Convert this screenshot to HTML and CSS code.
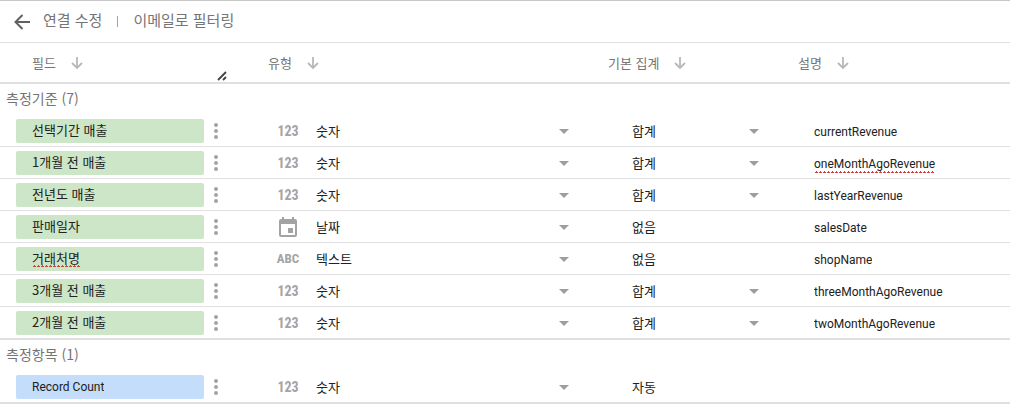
FILE: index.html
```html
<!DOCTYPE html>
<html lang="ko">
<head>
<meta charset="utf-8">
<title>연결 수정</title>
<link rel="stylesheet" href="styles.css">
</head>
<body>
<svg class="defs" aria-hidden="true">
  <symbol id="down" viewBox="0 0 12 12"><path d="M6 0v11M1 6l5 5 5-5" fill="none" stroke="currentColor" stroke-width="1.8"/></symbol>
  <symbol id="more" viewBox="0 0 4 16"><circle cx="2" cy="2" r="2"/><circle cx="2" cy="8" r="2"/><circle cx="2" cy="14" r="2"/></symbol>
  <symbol id="date" viewBox="0 0 18 20"><path fill-rule="evenodd" d="M3 0h2v2h8V0h2v2h1a2 2 0 0 1 2 2v14a2 2 0 0 1-2 2H2a2 2 0 0 1-2-2V4a2 2 0 0 1 2-2h1zM2 7v11h14V7zM9 11h5v5H9z"/></symbol>
</svg>
<header class="topbar">
  <button class="icon-button back" aria-label="뒤로"><svg width="16" height="16" viewBox="0 0 16 16"><path d="M16 8H2M8.500 1L1.500 8l7 7" fill="none" stroke="currentColor" stroke-width="2"/></svg></button>
  <a class="crumb" href="#">연결 수정</a>
  <span class="divider"></span>
  <a class="crumb" href="#">이메일로 필터링</a>
</header>
<table class="fields">
  <colgroup><col class="col-field"><col class="col-type"><col class="col-aggregation"><col></colgroup>
  <thead>
    <tr>
      <th><div class="heading">필드 <button class="icon-button" aria-label="필드 정렬"><svg width="12" height="12"><use href="#down"/></svg></button><svg class="resize" width="10" height="10" viewBox="0 0 10 10"><path d="M1 9l8-8M6 9l3-3" fill="none" stroke="#424242" stroke-width="1.8"/></svg></div></th>
      <th><div class="heading">유형 <button class="icon-button" aria-label="유형 정렬"><svg width="12" height="12"><use href="#down"/></svg></button></div></th>
      <th><div class="heading">기본 집계 <button class="icon-button" aria-label="집계 정렬"><svg width="12" height="12"><use href="#down"/></svg></button></div></th>
      <th><div class="heading">설명 <button class="icon-button" aria-label="설명 정렬"><svg width="12" height="12"><use href="#down"/></svg></button></div></th>
    </tr>
  </thead>
  <tbody>
    <tr class="group"><th colspan="4">측정기준 (7)</th></tr>
    <tr>
      <td><div class="name"><label class="chip"><input aria-label="필드 이름" value="선택기간 매출"></label><button class="icon-button" aria-label="더보기"><svg width="4" height="16"><use href="#more"/></svg></button></div></td>
      <td><div class="type"><span class="kind">123</span><label class="picker"><select aria-label="유형"><option>숫자</option></select></label></div></td>
      <td><div class="aggregation"><label class="picker"><select aria-label="기본 집계"><option>합계</option></select></label></div></td>
      <td><label class="description"><input aria-label="설명" value="currentRevenue"></label></td>
    </tr>
    <tr>
      <td><div class="name"><label class="chip"><input aria-label="필드 이름" value="1개월 전 매출"></label><button class="icon-button" aria-label="더보기"><svg width="4" height="16"><use href="#more"/></svg></button></div></td>
      <td><div class="type"><span class="kind">123</span><label class="picker"><select aria-label="유형"><option>숫자</option></select></label></div></td>
      <td><div class="aggregation"><label class="picker"><select aria-label="기본 집계"><option>합계</option></select></label></div></td>
      <td><label class="description"><input class="misspelled" aria-label="설명" value="oneMonthAgoRevenue"></label></td>
    </tr>
    <tr>
      <td><div class="name"><label class="chip"><input aria-label="필드 이름" value="전년도 매출"></label><button class="icon-button" aria-label="더보기"><svg width="4" height="16"><use href="#more"/></svg></button></div></td>
      <td><div class="type"><span class="kind">123</span><label class="picker"><select aria-label="유형"><option>숫자</option></select></label></div></td>
      <td><div class="aggregation"><label class="picker"><select aria-label="기본 집계"><option>합계</option></select></label></div></td>
      <td><label class="description"><input aria-label="설명" value="lastYearRevenue"></label></td>
    </tr>
    <tr>
      <td><div class="name"><label class="chip"><input aria-label="필드 이름" value="판매일자"></label><button class="icon-button" aria-label="더보기"><svg width="4" height="16"><use href="#more"/></svg></button></div></td>
      <td><div class="type"><span class="kind"><svg width="18" height="20"><use href="#date"/></svg></span><label class="picker"><select aria-label="유형"><option>날짜</option></select></label></div></td>
      <td><div class="aggregation">없음</div></td>
      <td><label class="description"><input aria-label="설명" value="salesDate"></label></td>
    </tr>
    <tr>
      <td><div class="name"><label class="chip"><input class="misspelled" aria-label="필드 이름" value="거래처명"></label><button class="icon-button" aria-label="더보기"><svg width="4" height="16"><use href="#more"/></svg></button></div></td>
      <td><div class="type"><span class="kind letters">ABC</span><label class="picker"><select aria-label="유형"><option>텍스트</option></select></label></div></td>
      <td><div class="aggregation">없음</div></td>
      <td><label class="description"><input aria-label="설명" value="shopName"></label></td>
    </tr>
    <tr>
      <td><div class="name"><label class="chip"><input aria-label="필드 이름" value="3개월 전 매출"></label><button class="icon-button" aria-label="더보기"><svg width="4" height="16"><use href="#more"/></svg></button></div></td>
      <td><div class="type"><span class="kind">123</span><label class="picker"><select aria-label="유형"><option>숫자</option></select></label></div></td>
      <td><div class="aggregation"><label class="picker"><select aria-label="기본 집계"><option>합계</option></select></label></div></td>
      <td><label class="description"><input aria-label="설명" value="threeMonthAgoRevenue"></label></td>
    </tr>
    <tr class="last">
      <td><div class="name"><label class="chip"><input aria-label="필드 이름" value="2개월 전 매출"></label><button class="icon-button" aria-label="더보기"><svg width="4" height="16"><use href="#more"/></svg></button></div></td>
      <td><div class="type"><span class="kind">123</span><label class="picker"><select aria-label="유형"><option>숫자</option></select></label></div></td>
      <td><div class="aggregation"><label class="picker"><select aria-label="기본 집계"><option>합계</option></select></label></div></td>
      <td><label class="description"><input aria-label="설명" value="twoMonthAgoRevenue"></label></td>
    </tr>
  </tbody>
  <tbody>
    <tr class="group"><th colspan="4">측정항목 (1)</th></tr>
    <tr class="last">
      <td><div class="name"><label class="chip metric"><input aria-label="필드 이름" value="Record Count"></label><button class="icon-button" aria-label="더보기"><svg width="4" height="16"><use href="#more"/></svg></button></div></td>
      <td><div class="type"><span class="kind">123</span><label class="picker"><select aria-label="유형"><option>숫자</option></select></label></div></td>
      <td><div class="aggregation">자동</div></td>
      <td></td>
    </tr>
  </tbody>
</table>
</body>
</html>
```
FILE: styles.css
```css
* { box-sizing: border-box; }
body {
  margin: 0;
  background: #fff;
  color: #212121;
  font: 13px/20px "Noto Sans CJK KR", sans-serif;
}
.defs { position: absolute; width: 0; height: 0; }
svg { display: block; fill: currentColor; }
input, select, button {
  margin: 0;
  padding: 0;
  border: 0;
  background: none;
  color: inherit;
  font: inherit;
}
input { height: 20px; field-sizing: content; }
.icon-button {
  display: flex;
  align-items: center;
  justify-content: center;
  color: #a3a3a3;
}
.topbar {
  display: flex;
  align-items: center;
  height: 43px;
  padding: 0 14px;
  border-top: 1px solid #c8c8c8;
  border-bottom: 1px solid #e0e0e0;
  font-size: 15px;
}
.topbar .back { margin-right: 13px; color: #616161; }
.crumb { padding-bottom: 4px; color: #757575; text-decoration: none; }
.divider { width: 1px; height: 11px; margin: 0 15px; background: #6fb1ea; }

.fields { width: 100%; border-collapse: separate; border-spacing: 0; table-layout: fixed; }
.col-field { width: 236px; }
.col-type { width: 340px; }
.col-aggregation { width: 190px; }
th, td { padding: 0; text-align: left; font-weight: 400; }
thead th { border-bottom: 2px solid #e0e0e0; color: #757575; }
td { border-bottom: 1px solid #e0e0e0; }
.last td { border-bottom-width: 2px; }
.group th { height: 31px; padding: 0 0 4px 6px; color: #757575; font-size: 14px; }
.heading { display: flex; align-items: center; gap: 15px; height: 39px; padding-left: 32px; }
.heading .icon-button { color: #b8b8b8; }
.resize { align-self: flex-end; margin: 0 9px 1px auto; }

.name { display: flex; align-items: center; height: 31px; padding: 0 18px 0 16px; gap: 10px; }
.chip {
  display: flex;
  flex: 1;
  align-items: center;
  min-width: 0;
  height: 24px;
  padding: 0 16px 2px;
  border-radius: 2px;
  background: #cde6c7;
}
.metric { padding-bottom: 0; background: #c3ddfb; font: 12px/20px Roboto, sans-serif; }
.type { display: flex; align-items: center; height: 31px; padding: 0 7px 0 40px; }
.kind {
  display: flex;
  justify-content: center;
  width: 24px;
  margin-right: 16px;
  color: #a3a3a3;
  font: bold 14px/20px "Liberation Sans Narrow", "Roboto Condensed", Roboto, sans-serif;
}
.letters { font-size: 13px; }
.aggregation { display: flex; align-items: center; height: 31px; padding: 0 7px 0 56px; }
.picker { display: flex; flex: 1; align-items: center; }
.picker select { flex: 1; appearance: none; height: 24px; }
.picker::after {
  content: "";
  margin-top: 2px;
  border: 5px solid transparent;
  border-top-color: #9e9e9e;
  border-bottom: 0;
}
.description {
  display: flex;
  align-items: center;
  height: 31px;
  padding: 2px 0 0 48px;
  font: 12px/20px Roboto, sans-serif;
}
/* Spelling squiggle: small peaks repeated along the text. */
.misspelled {
  background: conic-gradient(from 135deg at 50% 0, #e53935 90deg, transparent 0) 0 17px / 4px 2px repeat-x;
}
```
